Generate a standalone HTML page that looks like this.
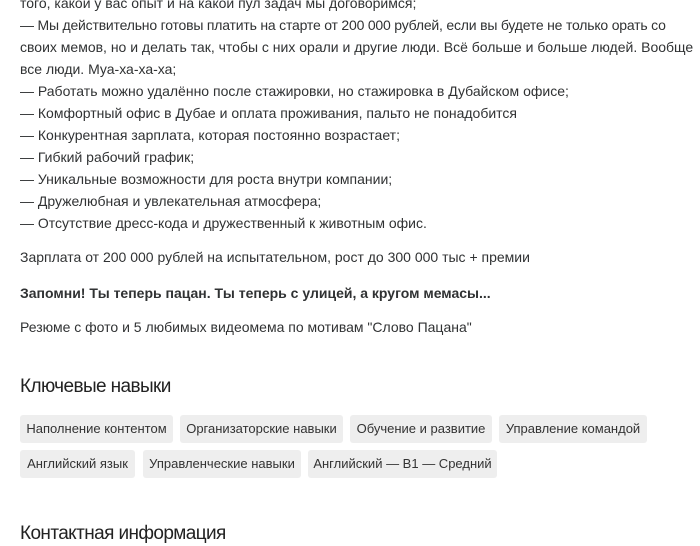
<!DOCTYPE html>
<html><head><meta charset="utf-8"><style>
body{margin:0;width:700px;height:546px;overflow:hidden;background:#fff;font-family:"Liberation Sans",Arial,sans-serif;color:#303233;}
.t{position:absolute;left:20px;font-size:14px;white-space:nowrap;line-height:22px;}
.l{letter-spacing:0px}
h2{position:absolute;left:20px;margin:0;font-size:19px;font-weight:normal;color:#222;white-space:nowrap;letter-spacing:-0.6px}
.tag{position:absolute;height:28px;line-height:28px;background:#eeeeee;border-radius:3px;font-size:13px;color:#333;text-align:center;white-space:nowrap}
</style></head><body>
<div class="t l" style="top:-8px">того, какой у вас опыт и на какой пул задач мы договоримся;</div>
<div class="t l" style="top:14px;letter-spacing:-0.2px">— Мы действительно готовы платить на старте от 200 000 рублей, если вы будете не только орать со</div>
<div class="t l" style="top:36px">своих мемов, но и делать так, чтобы с них орали и другие люди. Всё больше и больше людей. Вообще</div>
<div class="t l" style="top:58px">все люди. Муа-ха-ха-ха;</div>
<div class="t l" style="top:80px">— Работать можно удалённо после стажировки, но стажировка в Дубайском офисе;</div>
<div class="t l" style="top:102px">— Комфортный офис в Дубае и оплата проживания, пальто не понадобится</div>
<div class="t l" style="top:124px">— Конкурентная зарплата, которая постоянно возрастает;</div>
<div class="t l" style="top:146px">— Гибкий рабочий график;</div>
<div class="t l" style="top:168px">— Уникальные возможности для роста внутри компании;</div>
<div class="t l" style="top:190px">— Дружелюбная и увлекательная атмосфера;</div>
<div class="t l" style="top:212px">— Отсутствие дресс-кода и дружественный к животным офис.</div>
<div class="t" style="top:246px">Зарплата от 200 000 рублей на испытательном, рост до 300 000 тыс + премии</div>
<div class="t" style="top:282px;font-weight:bold">Запомни! Ты теперь пацан. Ты теперь с улицей, а кругом мемасы...</div>
<div class="t" style="top:316px">Резюме с фото и 5 любимых видеомема по мотивам "Слово Пацана"</div>
<h2 style="top:376px">Ключевые навыки</h2>
<div class="tag" style="left:20px;top:415px;width:153px">Наполнение контентом</div>
<div class="tag" style="left:180px;top:415px;width:163px">Организаторские навыки</div>
<div class="tag" style="left:350px;top:415px;width:142px">Обучение и развитие</div>
<div class="tag" style="left:499px;top:415px;width:148px">Управление командой</div>
<div class="tag" style="left:20px;top:450px;width:115px">Английский язык</div>
<div class="tag" style="left:143px;top:450px;width:158px">Управленческие навыки</div>
<div class="tag" style="left:308px;top:450px;width:189px">Английский — B1 — Средний</div>
<h2 style="top:523px">Контактная информация</h2>
</body></html>
